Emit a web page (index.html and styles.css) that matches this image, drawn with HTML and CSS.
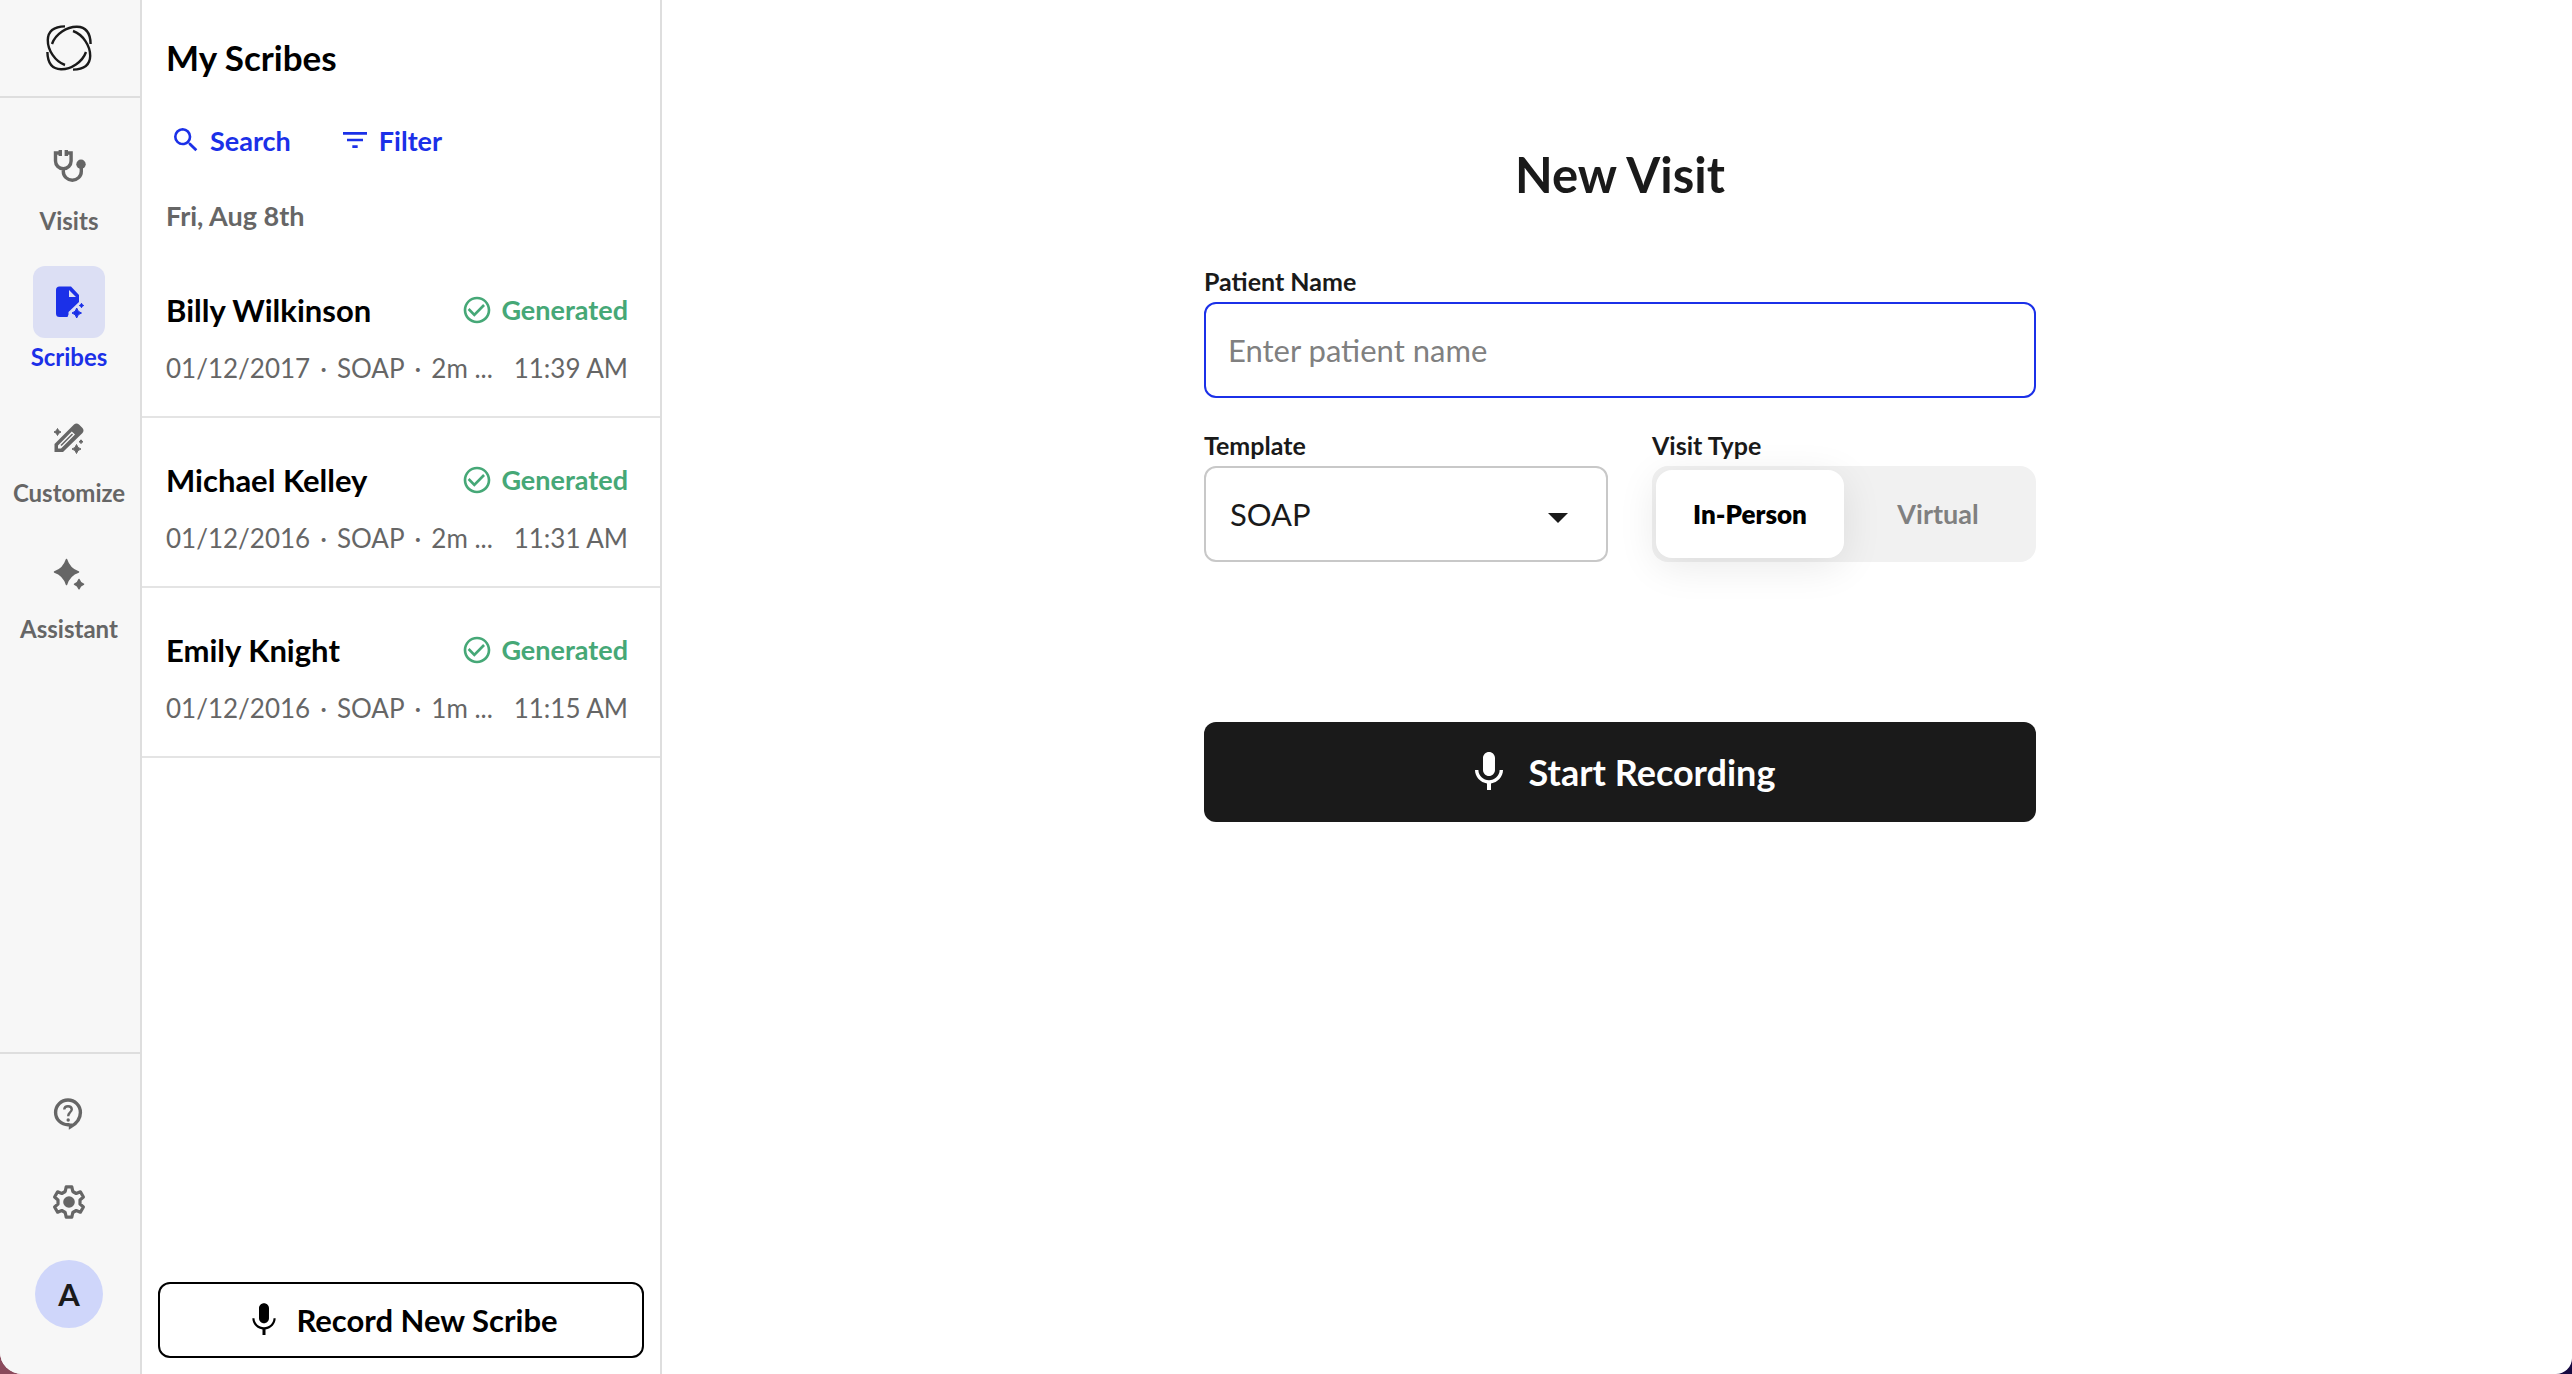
FILE: index.html
```html
<!DOCTYPE html>
<html lang="en">
<head>
  <meta charset="UTF-8">
  <meta name="viewport" content="width=device-width, initial-scale=1.0">
  <title>My Scribes</title>
  <link rel="stylesheet" href="styles.css">
</head>
<body>
  <div class="app">
    <nav class="sidebar">
      <a class="logo" href="#" aria-label="Home">
        <svg width="48" height="48" viewBox="0 0 48 48" fill="none" stroke="#1a1a1a" stroke-width="2.4">
          <path id="strand" d="M20 2.4C9 2.6 3 7 2.8 16C2.6 26 10 37.500 20 41"/>
          <use href="#strand" transform="rotate(90 24 24)"/>
          <use href="#strand" transform="rotate(180 24 24)"/>
          <use href="#strand" transform="rotate(270 24 24)"/>
        </svg>
      </a>
      <div class="nav">
        <a class="nav-item" href="#">
          <span class="nav-icon">
            <svg width="36" height="36" viewBox="0 0 36 36" fill="none" stroke="currentColor" stroke-width="3.4">
              <path d="M9.300 5H4.500v8a7.800 7.800 0 0 0 15.600 0V5h-4.800M9.300 2v6M15.300 2v6M12.300 21v2.500a9 8.700 0 0 0 18 0V19"/>
              <circle cx="30" cy="16.300" r="4.700" fill="currentColor" stroke="none"/>
            </svg>
          </span>
          <span>Visits</span>
        </a>
        <a class="nav-item active" href="#">
          <span class="nav-icon">
            <svg width="36" height="36" viewBox="0 0 36 36" fill="currentColor">
              <path fill-rule="evenodd" d="M8.500 2.500H20L28 11v7L17.500 28v2.500L16.500 33H8.500A3.500 3.500 0 0 1 5 29.500V6A3.500 3.500 0 0 1 8.500 2.500ZM18 6v7h7Z"/>
              <path d="M25.700 24Q26.500 28 30.500 29Q26.500 30 25.700 34Q25 30 21 29Q25 28 25.700 24ZM30.500 19.300Q31 21 32.700 21.500Q31 22 30.500 23.700Q30 22 28.300 21.500Q30 21 30.500 19.300Z" stroke="currentColor"/>
            </svg>
          </span>
          <span>Scribes</span>
        </a>
        <a class="nav-item" href="#">
          <span class="nav-icon">
            <svg width="36" height="36" viewBox="0 0 36 36" fill="currentColor">
              <path fill-rule="evenodd" d="M3.500 24L23 4.500Q25.500 2.500 28 4.500L31.500 8Q33.500 10.500 31.500 13L12 32H3.500ZM7 25.500V28.500H10L24 14.500L20.800 11.500Z"/>
              <path d="M10 25.500L21.500 14" stroke="currentColor" stroke-width="1.600"/>
              <path d="M6.500 8.500Q7.200 11.300 10 12Q7.200 12.700 6.500 15.500Q5.800 12.700 3 12Q5.800 11.300 6.500 8.500ZM25.500 24.500Q26.300 28.200 30 29Q26.300 29.800 25.500 33.500Q24.700 29.800 21 29Q24.700 28.200 25.500 24.500ZM30 19.800Q30.500 21.200 32 21.700Q30.500 22.200 30 23.600Q29.500 22.200 28 21.700Q29.500 21.200 30 19.800Z" stroke="currentColor"/>
            </svg>
          </span>
          <span>Customize</span>
        </a>
        <a class="nav-item" href="#">
          <span class="nav-icon">
            <svg width="36" height="36" viewBox="0 0 36 36" fill="currentColor" stroke="currentColor" stroke-width="1.500" stroke-linejoin="round">
              <path d="M15.500 3.500Q18.500 13 27.500 16Q18.500 19 15.500 28.500Q12.500 19 3.500 16Q12.500 13 15.500 3.500ZM28 23.500Q29 27.200 32.500 28.200Q29 29.200 28 32.800Q27 29.200 23.500 28.200Q27 27.200 28 23.500Z"/>
            </svg>
          </span>
          <span>Assistant</span>
        </a>
      </div>
      <div class="sidebar-footer">
        <button class="icon-btn" aria-label="Help">
          <svg width="36" height="36" viewBox="0 0 36 36" fill="none" stroke="currentColor" stroke-width="3.400">
            <path d="M18.500 28.800H17A12.400 12.400 0 1 1 29.400 16.400C29.400 22.500 25.500 27.500 19.500 30.800V27.500"/>
            <path d="M13.200 13.500Q13.500 10.300 17 10.300T20.800 13.300Q20.800 15 18.800 16.700Q17.200 18 17.200 20.300" stroke-width="2.400"/>
            <circle cx="17.200" cy="24" r="1.700" fill="currentColor" stroke="none"/>
          </svg>
        </button>
        <button class="icon-btn" aria-label="Settings">
          <svg width="36" height="36" viewBox="-18 -18 36 36" fill="none" stroke="currentColor" stroke-width="3.200" stroke-linejoin="round">
            <path d="M-2.800 -15.200H2.800L3.800 -10.500L7.200 -8.500L11.400 -10.200L14.400 -5L11 -2V2L14.400 5L11.400 10.200L7.200 8.500L3.800 10.500L2.800 15.200H-2.800L-3.800 10.500L-7.200 8.500L-11.400 10.200L-14.400 5L-11 2V-2L-14.400 -5L-11.400 -10.200L-7.200 -8.500L-3.800 -10.500Z"/>
            <circle r="5.800" fill="currentColor" stroke="none"/>
          </svg>
        </button>
        <button class="avatar">A</button>
      </div>
    </nav>

    <section class="panel">
      <h2>My Scribes</h2>
      <div class="tools">
        <button class="tool">
          <svg width="32" height="32" viewBox="0 0 24 24" fill="currentColor"><path d="M15.500 14h-.79l-.28-.27A6.471 6.471 0 0 0 16 9.500 6.500 6.500 0 1 0 9.500 16c1.610 0 3.090-.59 4.230-1.570l.27.28v.79l5 4.990L20.490 19l-4.990-5zm-6 0C7.010 14 5 11.990 5 9.500S7.010 5 9.500 5 14 7.010 14 9.500 11.990 14 9.500 14z"/></svg>
          Search
        </button>
        <button class="tool">
          <svg width="32" height="32" viewBox="0 0 24 24" fill="currentColor"><path d="M10 18h4v-2h-4v2zM3 6v2h18V6H3zm3 7h12v-2H6v2z"/></svg>
          Filter
        </button>
      </div>
      <div class="date">Fri, Aug 8th</div>
      <ul class="list">
        <li class="row">
          <div class="line">
            <span class="name">Billy Wilkinson</span>
            <span class="status">
              <svg width="32" height="32" viewBox="0 0 24 24" fill="currentColor"><path d="M16.590 7.580L10 14.170l-3.590-3.580L5 12l5 5 8-8zM12 2C6.480 2 2 6.480 2 12s4.480 10 10 10 10-4.480 10-10S17.520 2 12 2zm0 18c-4.420 0-8-3.580-8-8s3.580-8 8-8 8 3.580 8 8-3.580 8-8 8z"/></svg>
              Generated
            </span>
          </div>
          <div class="line meta">
            <span class="details"><span>01/12/2017</span><span>·</span><span>SOAP</span><span>·</span><span>2m ...</span></span>
            <span>11:39 AM</span>
          </div>
        </li>
        <li class="row">
          <div class="line">
            <span class="name">Michael Kelley</span>
            <span class="status">
              <svg width="32" height="32" viewBox="0 0 24 24" fill="currentColor"><path d="M16.590 7.580L10 14.170l-3.590-3.580L5 12l5 5 8-8zM12 2C6.480 2 2 6.480 2 12s4.480 10 10 10 10-4.480 10-10S17.520 2 12 2zm0 18c-4.420 0-8-3.580-8-8s3.580-8 8-8 8 3.580 8 8-3.580 8-8 8z"/></svg>
              Generated
            </span>
          </div>
          <div class="line meta">
            <span class="details"><span>01/12/2016</span><span>·</span><span>SOAP</span><span>·</span><span>2m ...</span></span>
            <span>11:31 AM</span>
          </div>
        </li>
        <li class="row">
          <div class="line">
            <span class="name">Emily Knight</span>
            <span class="status">
              <svg width="32" height="32" viewBox="0 0 24 24" fill="currentColor"><path d="M16.590 7.580L10 14.170l-3.590-3.580L5 12l5 5 8-8zM12 2C6.480 2 2 6.480 2 12s4.480 10 10 10 10-4.480 10-10S17.520 2 12 2zm0 18c-4.420 0-8-3.580-8-8s3.580-8 8-8 8 3.580 8 8-3.580 8-8 8z"/></svg>
              Generated
            </span>
          </div>
          <div class="line meta">
            <span class="details"><span>01/12/2016</span><span>·</span><span>SOAP</span><span>·</span><span>1m ...</span></span>
            <span>11:15 AM</span>
          </div>
        </li>
      </ul>
      <button class="record">
        <svg width="40" height="40" viewBox="0 0 24 24" fill="currentColor"><path d="M12 14c1.660 0 2.990-1.340 2.990-3L15 5c0-1.660-1.340-3-3-3S9 3.340 9 5v6c0 1.660 1.340 3 3 3zm5.700-3c0 3-2.700 5.400-5.700 5.400S6.300 14 6.300 11H5c0 3.410 2.720 6.230 6.100 6.720V21h1.800v-3.280c3.380-.48 6.100-3.300 6.100-6.720h-1.300z"/></svg>
        Record New Scribe
      </button>
    </section>

    <main class="main">
      <form class="form">
        <h1>New Visit</h1>
        <div class="field">
          <label for="patient">Patient Name</label>
          <input type="text" id="patient" class="text-input" placeholder="Enter patient name">
        </div>
        <div class="fields">
          <div class="field template">
            <label for="template">Template</label>
            <div class="select">
              <select id="template">
                <option>SOAP</option>
              </select>
              <svg class="caret" width="20" height="10" viewBox="0 0 20 10"><path d="M0 0h20L10 10z" fill="#1a1a1a"/></svg>
            </div>
          </div>
          <fieldset class="field type">
            <legend>Visit Type</legend>
            <div class="toggle">
              <input type="radio" name="type" id="in-person" checked>
              <label for="in-person">In-Person</label>
              <input type="radio" name="type" id="virtual">
              <label for="virtual">Virtual</label>
            </div>
          </fieldset>
        </div>
        <button type="button" class="start">
          <svg width="48" height="48" viewBox="0 0 24 24" fill="currentColor"><path d="M12 14c1.660 0 2.990-1.340 2.990-3L15 5c0-1.660-1.340-3-3-3S9 3.340 9 5v6c0 1.660 1.340 3 3 3zm5.300-3c0 3-2.540 5.100-5.300 5.100S6.700 14 6.700 11H5c0 3.410 2.720 6.230 6 6.720V21h2v-3.280c3.280-.48 6-3.300 6-6.720h-1.700z"/></svg>
          Start Recording
        </button>
      </form>
    </main>
  </div>
</body>
</html>
```
FILE: styles.css
```css
* {
  box-sizing: border-box;
}

body {
  margin: 0;
  background: linear-gradient(to right, #8a4a5c 50%, #170a42 50%);
  font-family: Lato, "Open Sans", sans-serif;
  color: #1a1a1a;
}

button, input, select {
  font-family: inherit;
  color: inherit;
}

button {
  cursor: pointer;
  border: none;
  background: none;
  padding: 0;
}

.app {
  display: flex;
  min-height: 100vh;
  background-color: #fff;
  border-radius: 0 0 16px 22px;
  overflow: hidden;
}

/* sidebar */
.sidebar {
  display: flex;
  flex-direction: column;
  width: 142px;
  flex-shrink: 0;
  background-color: #f7f7f7;
  border-right: 2px solid #dedede;
}

.logo {
  display: flex;
  align-items: center;
  justify-content: center;
  height: 98px;
  padding-right: 2px;
  border-bottom: 2px solid #dedede;
}

.nav {
  display: flex;
  flex-direction: column;
  gap: 32px;
  padding: 32px 2px 0 0;
  flex: 1;
}

.nav-item {
  display: flex;
  flex-direction: column;
  align-items: center;
  gap: 6px;
  font-size: 24px;
  font-weight: 700;
  line-height: 26px;
  color: #666;
  text-decoration: none;
}

.nav-icon {
  display: flex;
  align-items: center;
  justify-content: center;
  width: 72px;
  height: 72px;
  border-radius: 12px;
}

.nav-item.active {
  color: #1b30e8;
}

.nav-item.active .nav-icon {
  background-color: #dcdff4;
}

.sidebar-footer {
  display: flex;
  flex-direction: column;
  align-items: center;
  padding: 24px 2px 46px 0;
  border-top: 2px solid #dedede;
}

.icon-btn {
  display: flex;
  align-items: center;
  justify-content: center;
  width: 72px;
  height: 72px;
  margin-bottom: 16px;
  color: #666;
}

.avatar {
  width: 68px;
  height: 68px;
  margin-top: 6px;
  border-radius: 50%;
  background-color: #cfd6fa;
  font-size: 31px;
  font-weight: 700;
}

/* scribes list */
.panel {
  display: flex;
  flex-direction: column;
  width: 520px;
  flex-shrink: 0;
  border-right: 2px solid #dedede;
  color: #000;
}

.panel h2 {
  margin: 35px 24px 37px;
  font-size: 35px;
  font-weight: 700;
  line-height: 44px;
}

.tools {
  display: flex;
  gap: 48px;
  padding: 0 28px;
}

.tool {
  display: flex;
  align-items: center;
  gap: 8px;
  height: 48px;
  font-size: 27px;
  font-weight: 700;
  color: #1b30e8;
}

.date {
  margin: 36px 24px 16px;
  font-size: 27px;
  font-weight: 700;
  line-height: 32px;
  color: #666;
}

.list {
  flex: 1;
  margin: 0;
  padding: 0;
  list-style: none;
}

.row {
  display: flex;
  flex-direction: column;
  gap: 24px;
  padding: 44px 32px 32px 24px;
  border-bottom: 2px solid #e4e4e4;
}

.line {
  display: flex;
  align-items: center;
  justify-content: space-between;
  line-height: 32px;
}

.name {
  font-size: 31px;
  font-weight: 700;
  line-height: 36px;
}

.status {
  display: flex;
  align-items: center;
  gap: 8px;
  font-size: 27px;
  font-weight: 700;
  color: #46a877;
}

.meta {
  font-size: 26px;
  color: #666;
  white-space: nowrap;
}

.details {
  display: flex;
  gap: 10px;
}

.record {
  display: flex;
  align-items: center;
  justify-content: center;
  gap: 12px;
  height: 76px;
  margin: 0 16px 16px;
  border: 2px solid #000;
  border-radius: 12px;
  font-size: 31px;
  font-weight: 700;
}

/* new visit form */
.main {
  flex: 1;
  padding: 144px 0 0 6px;
}

.form {
  max-width: 832px;
  margin: 0 auto;
}

.form h1 {
  margin: 0 0 62px;
  font-size: 49px;
  font-weight: 700;
  line-height: 60px;
  text-align: center;
}

.field {
  display: flex;
  flex-direction: column;
  gap: 6px;
  font-size: 25px;
  font-weight: 700;
  line-height: 30px;
}

.text-input {
  height: 96px;
  padding: 0 22px;
  border: 2px solid #1b30e8;
  border-radius: 12px;
  font-size: 31px;
  outline: none;
}

.text-input::placeholder {
  color: #808080;
}

.fields {
  display: flex;
  gap: 44px;
  margin: 32px 0 160px;
}

.template {
  flex: 1;
}

.select {
  position: relative;
}

.select select {
  appearance: none;
  width: 100%;
  height: 96px;
  padding: 0 24px;
  border: 2px solid #c8c8c8;
  border-radius: 12px;
  background-color: #fff;
  font-size: 31px;
}

.caret {
  position: absolute;
  right: 40px;
  top: 47px;
  pointer-events: none;
}

.type {
  display: block;
  width: 384px;
  margin: 0;
  padding: 0;
  border: none;
}

.type legend {
  padding: 0;
  margin-bottom: 6px;
}

.toggle {
  display: flex;
  height: 96px;
  padding: 4px;
  border-radius: 16px;
  background-color: #f1f1f1;
}

.toggle input {
  appearance: none;
  width: 0;
  margin: 0;
}

.toggle label {
  display: flex;
  flex: 1;
  align-items: center;
  justify-content: center;
  border-radius: 16px;
  font-size: 27px;
  font-weight: 700;
  color: #808080;
  cursor: pointer;
}

.toggle input:checked + label {
  background-color: #fff;
  color: #000;
  font-size: 26px;
  font-weight: 800;
  box-shadow: 0 8px 40px rgba(0, 0, 0, 0.09);
}

.start {
  display: flex;
  align-items: center;
  justify-content: center;
  gap: 16px;
  width: 100%;
  height: 100px;
  border-radius: 12px;
  background-color: #1a1a1a;
  font-size: 36px;
  font-weight: 700;
  color: #fff;
}
```
